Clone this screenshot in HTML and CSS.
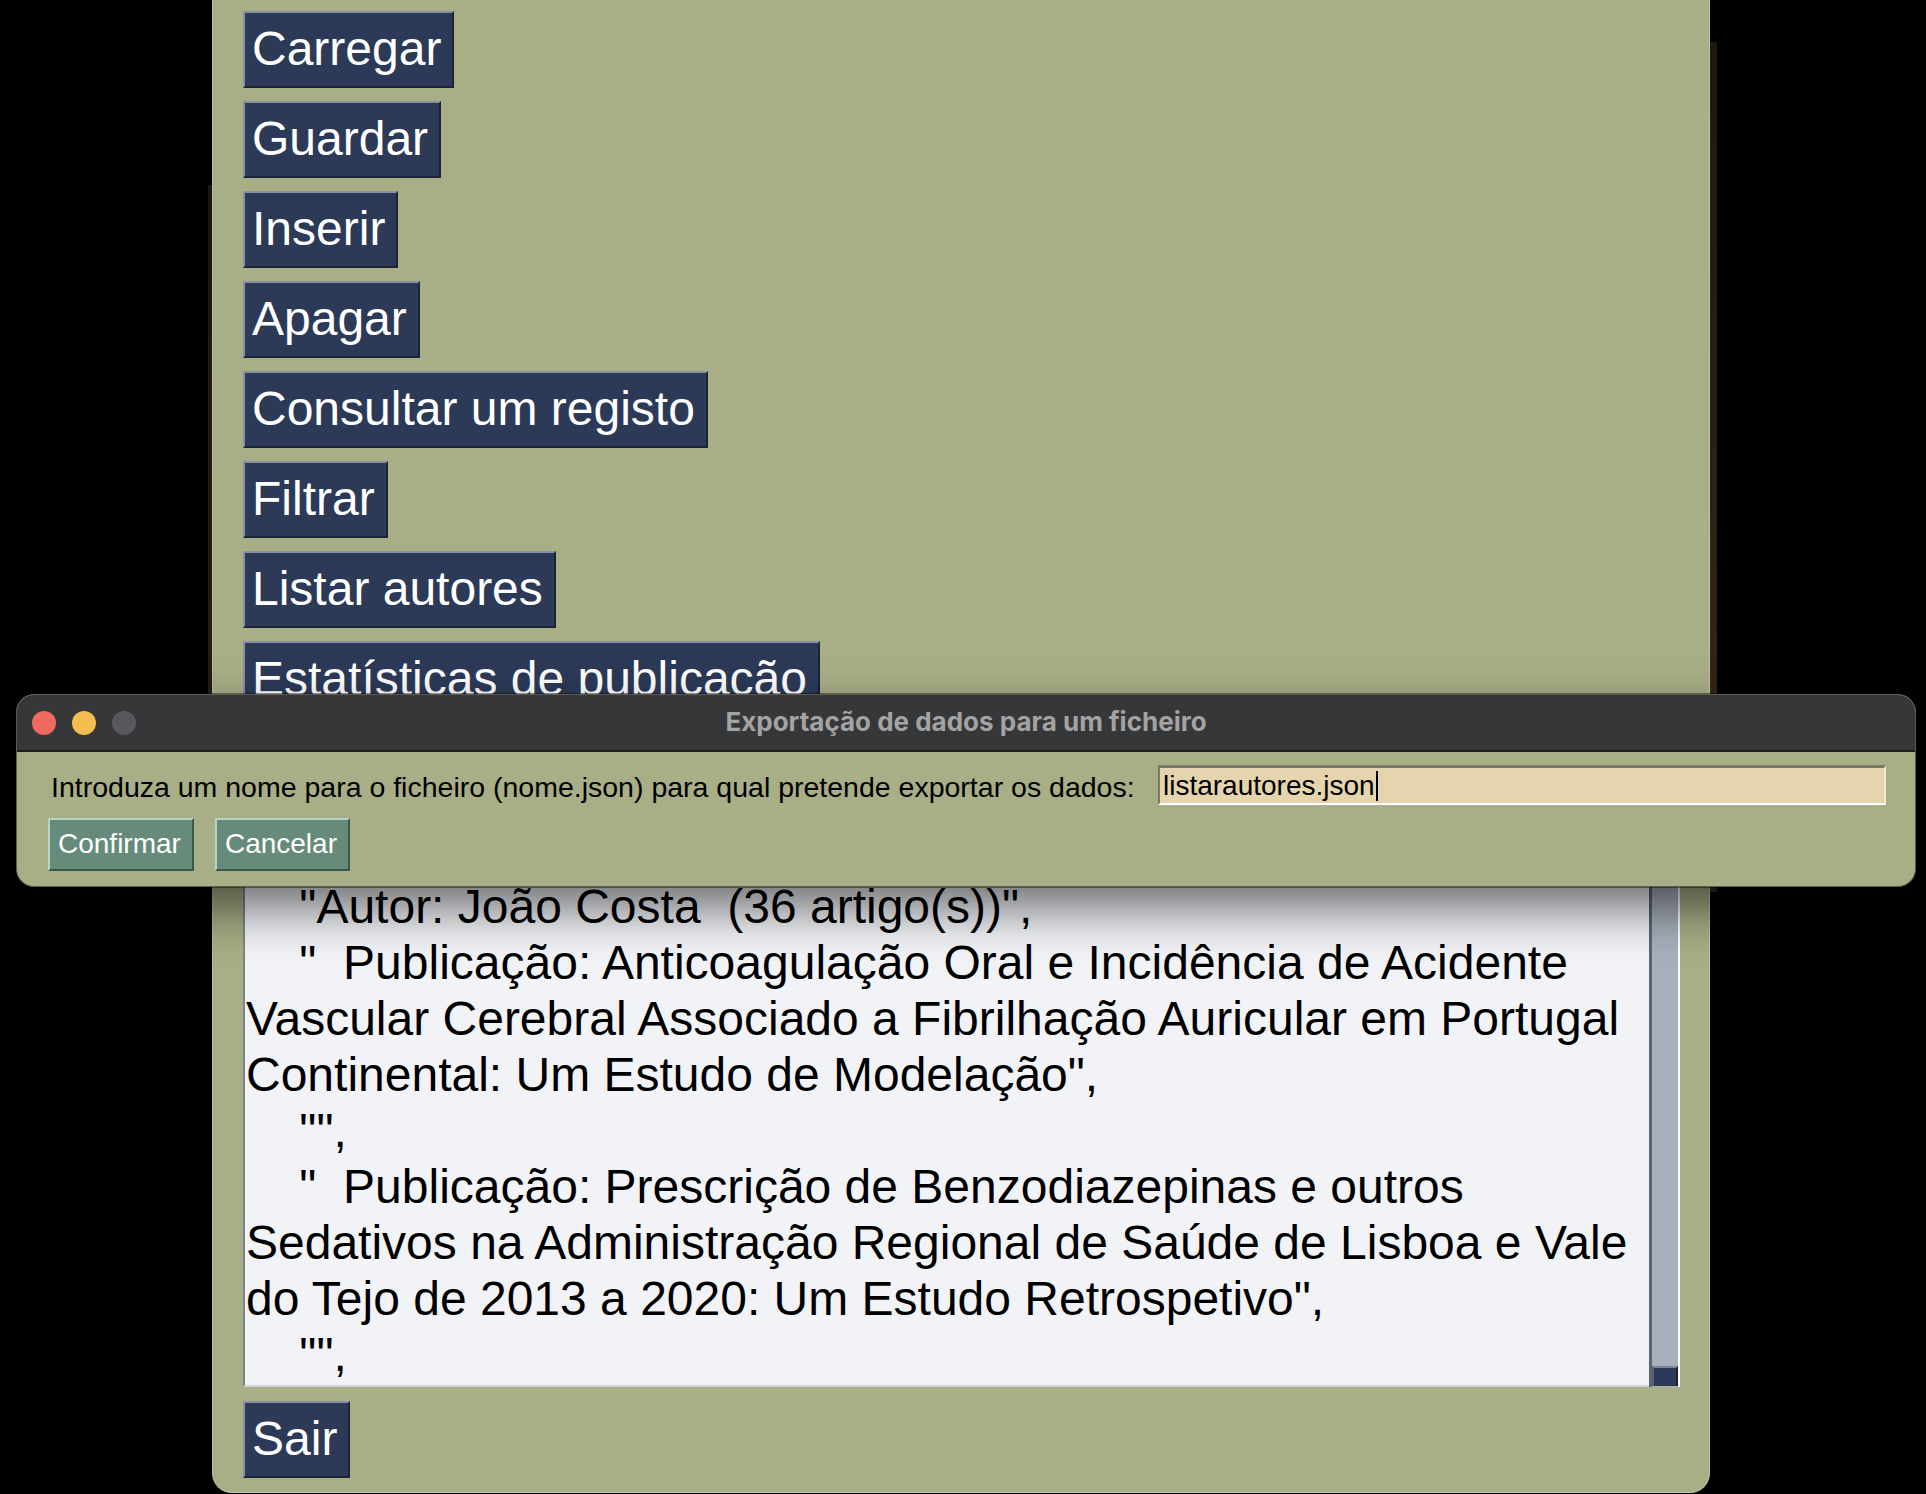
FILE: index.html
```html
<!DOCTYPE html>
<html lang="pt">
<head>
<meta charset="utf-8">
<title>Gestor de publicações</title>
<link rel="stylesheet" href="styles.css">
</head>
<body>
<div class="desktop">
  <div class="edge-strip"></div>
  <div class="edge-strip-left"></div>

  <div class="main-window">
    <button class="btn">Carregar</button>
    <button class="btn">Guardar</button>
    <button class="btn">Inserir</button>
    <button class="btn">Apagar</button>
    <button class="btn">Consultar um registo</button>
    <button class="btn">Filtrar</button>
    <button class="btn">Listar autores</button>
    <button class="btn">Estatísticas de publicação</button>
    <div class="btn-slot"></div>

    <div class="text-widget">
      <div class="text-body">
        <div class="line">    "Autor: João Costa  (36 artigo(s))",</div>
        <div class="line">    "  Publicação: Anticoagulação Oral e Incidência de Acidente</div>
        <div class="line">Vascular Cerebral Associado a Fibrilhação Auricular em Portugal</div>
        <div class="line">Continental: Um Estudo de Modelação",</div>
        <div class="line">    "",</div>
        <div class="line">    "  Publicação: Prescrição de Benzodiazepinas e outros</div>
        <div class="line">Sedativos na Administração Regional de Saúde de Lisboa e Vale</div>
        <div class="line">do Tejo de 2013 a 2020: Um Estudo Retrospetivo",</div>
        <div class="line">    "",</div>
      </div>
      <div class="scrollbar">
        <div class="thumb"></div>
      </div>
    </div>

    <button class="btn btn-exit">Sair</button>
  </div>

  <div class="dialog">
    <div class="titlebar">
      <div class="lights">
        <span class="light red"></span>
        <span class="light yellow"></span>
        <span class="light gray"></span>
      </div>
      <div class="title">Exportação de dados para um ficheiro</div>
    </div>
    <div class="dialog-body">
      <div class="field-row">
        <label class="prompt">Introduza um nome para o ficheiro (nome.json) para qual pretende exportar os dados:</label>
        <div class="entry"><span class="entry-text">listarautores.json</span><span class="caret"></span></div>
      </div>
      <div class="action-row">
        <button class="dbtn">Confirmar</button>
        <button class="dbtn">Cancelar</button>
      </div>
    </div>
  </div>
</div>
</body>
</html>
```

FILE: styles.css
```css
* { box-sizing: border-box; }

html, body {
  margin: 0;
  padding: 0;
  background: #000;
}

body {
  width: 1926px;
  height: 1494px;
  overflow: hidden;
  font-family: "Liberation Sans", Arial, sans-serif;
}

.desktop {
  position: relative;
  width: 1926px;
  height: 1494px;
  background: #000;
}

.edge-strip {
  position: absolute;
  left: 1710px;
  top: 42px;
  width: 7px;
  height: 850px;
  background: linear-gradient(#1f1710, #3b2818);
}

.edge-strip-left {
  position: absolute;
  left: 208px;
  top: 185px;
  width: 4px;
  height: 700px;
  background: linear-gradient(#1c1510, #2a1e14);
}

/* ---------- main window ---------- */
.main-window {
  position: absolute;
  left: 212px;
  top: 0;
  width: 1498px;
  height: 1493px;
  background: #a8ae86;
  border-right: 1px solid #c3c7a9;
  border-left: 1px solid #b7bc98;
  border-bottom: 1px solid #bfc3a4;
  border-radius: 0 0 20px 20px;
  display: flex;
  flex-direction: column;
  align-items: flex-start;
  gap: 13px;
  padding: 11px 0 0 30px;
}

.btn {
  font-family: "Liberation Sans", Arial, sans-serif;
  font-size: 48px;
  line-height: 57px;
  color: #fff;
  background: #2c3a58;
  border-style: solid;
  border-width: 2px;
  border-color: #8790a4 #1b2336 #1b2336 #8790a4;
  padding: 7px 11px 9px 7px;
  margin: 0;
  border-radius: 0;
  white-space: nowrap;
  cursor: pointer;
}

.btn-slot {
  height: 77px;
  width: 10px;
}

.btn-exit {
  margin-top: 1px;
}

/* ---------- text widget ---------- */
.text-widget {
  width: 1437px;
  height: 566px;
  display: flex;
}

.text-body {
  width: 1406px;
  height: 100%;
  background: #f1f3f7;
  border-left: 2px solid #7d848d;
  border-top: 2px solid #7d848d;
  border-bottom: 2px solid #d2d3d8;
  padding: 56px 0 0 1px;
  overflow: hidden;
}

.line {
  font-family: "Liberation Sans", Arial, sans-serif;
  font-size: 48px;
  line-height: 56px;
  color: #000;
  white-space: pre;
}

.scrollbar {
  width: 31px;
  height: 100%;
  background: #a7b0bc;
  border-left: 3px solid #5f656e;
  border-right: 2px solid #ffffff;
  display: flex;
  flex-direction: column;
  justify-content: flex-end;
}

.thumb {
  height: 20px;
  margin-bottom: 1px;
  background: #2c3a58;
  border-top: 2px solid #7d8799;
  border-left: 2px solid #55607a;
  border-right: 2px solid #1b2336;
}

/* ---------- dialog ---------- */
.dialog {
  position: absolute;
  left: 16px;
  top: 694px;
  width: 1900px;
  height: 193px;
  border-radius: 18px;
  background: #a8ae86;
  overflow: hidden;
  border: 1px solid #5a5b52;
  box-shadow: 0 22px 50px rgba(0, 0, 0, 0.55), 0 0 0 1px rgba(0, 0, 0, 0.4);
  display: flex;
  flex-direction: column;
}

.titlebar {
  height: 57px;
  background: #363739;
  border-bottom: 2px solid #1d1d1f;
  display: flex;
  align-items: center;
  position: relative;
  flex: none;
}

.lights {
  display: flex;
  gap: 16px;
  padding-left: 15px;
  position: relative;
  z-index: 1;
}

.light {
  width: 24px;
  height: 24px;
  border-radius: 50%;
  display: block;
}
.light.red { background: #ee6a5f; }
.light.yellow { background: #f5bd4f; }
.light.gray { background: #57585b; }

.title {
  position: absolute;
  left: 0;
  right: 0;
  top: 0;
  bottom: 0;
  display: flex;
  align-items: center;
  justify-content: center;
  font-family: Inter, "Liberation Sans", sans-serif;
  font-weight: 700;
  font-size: 26px;
  color: #a3a3a4;
  padding-bottom: 2px;
}

.dialog-body {
  flex: 1;
  padding: 13px 29px 0 31px;
  display: flex;
  flex-direction: column;
  gap: 13px;
}

.field-row {
  display: flex;
  align-items: center;
  height: 40px;
}

.prompt {
  font-family: "Liberation Sans", Arial, sans-serif;
  font-size: 28.5px;
  color: #000;
  padding-left: 3px;
  padding-top: 5px;
  white-space: nowrap;
}

.entry {
  margin-left: auto;
  width: 728px;
  height: 40px;
  background: #e4d5ae;
  border-top: 3px solid #7c7866;
  border-left: 2px solid #7c7866;
  border-bottom: 2px solid #ffffff;
  border-right: 2px solid #f2ead4;
  display: flex;
  align-items: center;
  padding-left: 3px;
}

.entry-text {
  font-family: "Liberation Sans", Arial, sans-serif;
  font-size: 28px;
  color: #000;
  line-height: 32px;
}

.caret {
  width: 2px;
  height: 30px;
  background: #000;
  margin-left: 1px;
}

.action-row {
  display: flex;
  gap: 21px;
}

.dbtn {
  font-family: "Liberation Sans", Arial, sans-serif;
  font-size: 28px;
  line-height: 32px;
  color: #fff;
  background: #668b7b;
  border-style: solid;
  border-width: 2px;
  border-color: #b8d3c8 #3d574c #3d574c #b8d3c8;
  padding: 8px 11px 9px 8px;
  height: 53px;
  margin: 0;
  border-radius: 0;
  white-space: nowrap;
}
```
